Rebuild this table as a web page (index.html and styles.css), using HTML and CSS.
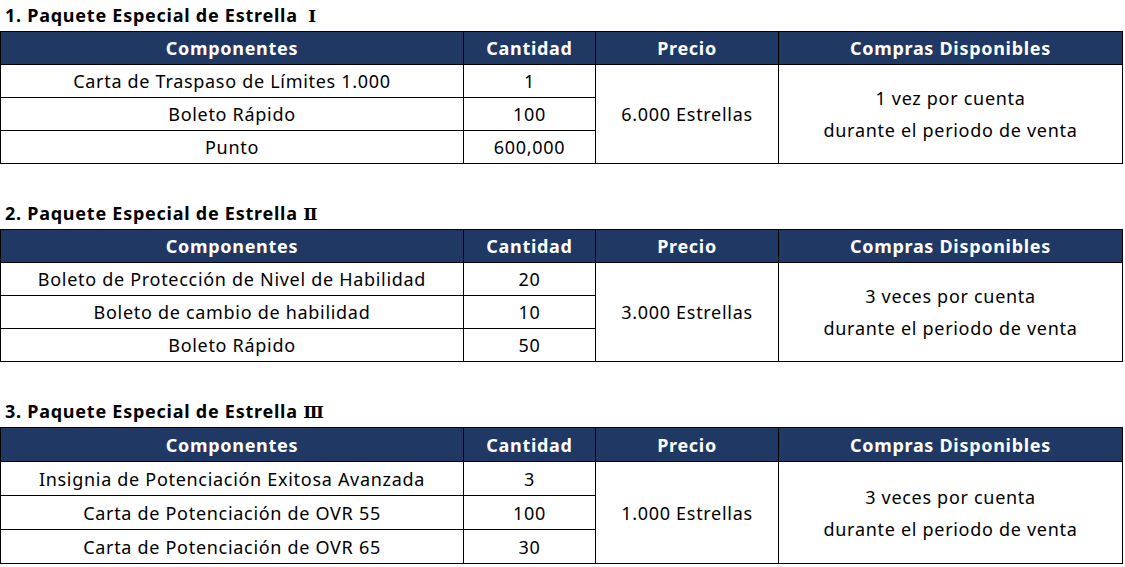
FILE: index.html
```html
<!DOCTYPE html>
<html lang="es">
<head>
<meta charset="utf-8">
<link rel="stylesheet" href="styles.css">
</head>
<body>
<section class="pack">
  <h2 class="title">1. Paquete Especial de Estrella <span class="roman one">Ⅰ</span></h2>
  <table class="grid">
    <colgroup><col class="c1"><col class="c2"><col class="c3"><col class="c4"></colgroup>
    <thead><tr><th>Componentes</th><th>Cantidad</th><th>Precio</th><th>Compras Disponibles</th></tr></thead>
    <tbody>
      <tr><td>Carta de Traspaso de Límites 1.000</td><td>1</td><td rowspan="3">6.000 Estrellas</td><td rowspan="3" class="multi">1 vez por cuenta<br>durante el periodo de venta</td></tr>
      <tr><td>Boleto Rápido</td><td>100</td></tr>
      <tr><td>Punto</td><td>600,000</td></tr>
    </tbody>
  </table>
</section>
<section class="pack">
  <h2 class="title">2. Paquete Especial de Estrella <span class="roman">Ⅱ</span></h2>
  <table class="grid">
    <colgroup><col class="c1"><col class="c2"><col class="c3"><col class="c4"></colgroup>
    <thead><tr><th>Componentes</th><th>Cantidad</th><th>Precio</th><th>Compras Disponibles</th></tr></thead>
    <tbody>
      <tr><td>Boleto de Protección de Nivel de Habilidad</td><td>20</td><td rowspan="3">3.000 Estrellas</td><td rowspan="3" class="multi">3 veces por cuenta<br>durante el periodo de venta</td></tr>
      <tr><td>Boleto de cambio de habilidad</td><td>10</td></tr>
      <tr><td>Boleto Rápido</td><td>50</td></tr>
    </tbody>
  </table>
</section>
<section class="pack tall">
  <h2 class="title">3. Paquete Especial de Estrella <span class="roman">Ⅲ</span></h2>
  <table class="grid">
    <colgroup><col class="c1"><col class="c2"><col class="c3"><col class="c4"></colgroup>
    <thead><tr><th>Componentes</th><th>Cantidad</th><th>Precio</th><th>Compras Disponibles</th></tr></thead>
    <tbody>
      <tr><td>Insignia de Potenciación Exitosa Avanzada</td><td>3</td><td rowspan="3">1.000 Estrellas</td><td rowspan="3" class="multi">3 veces por cuenta<br>durante el periodo de venta</td></tr>
      <tr><td>Carta de Potenciación de OVR 55</td><td>100</td></tr>
      <tr><td>Carta de Potenciación de OVR 65</td><td>30</td></tr>
    </tbody>
  </table>
</section>
</body>
</html>
```

FILE: styles.css
```css
html, body {
  margin: 0;
  padding: 0;
  background: #ffffff;
}
body {
  font-family: "Noto Sans", "Noto Sans CJK KR", sans-serif;
  color: #000;
}
.pack {
  margin: 0 0 34px 0;
}
.pack:last-child {
  margin-bottom: 0;
}
.title {
  margin: 0;
  padding-left: 5px;
  height: 31px;
  line-height: 31px;
  font-size: 18px;
  font-weight: 700;
  letter-spacing: 0.75px;
  box-sizing: border-box;
}
.roman {
  font-family: "DejaVu Serif", "Liberation Serif", serif;
  font-weight: 700;
  font-size: 17px;
  letter-spacing: 0;
}
.roman.one {
  margin-left: 5px;
}
.grid {
  border-collapse: collapse;
  width: 1122px;
  table-layout: fixed;
}
.c1 { width: 463px; }
.c2 { width: 132px; }
.c3 { width: 183px; }
.c4 { width: 344px; }
.grid th, .grid td {
  border: 1px solid #000;
  text-align: center;
  padding: 0;
  font-size: 18px;
  letter-spacing: 0.7px;
}
.grid th {
  background: #203864;
  color: #fff;
  font-weight: 700;
  height: 32px;
}
.grid td {
  height: 32px;
}
.grid td.multi {
  line-height: 32px;
}
.tall .grid th,
.tall .grid td {
  height: 33px;
}
```
